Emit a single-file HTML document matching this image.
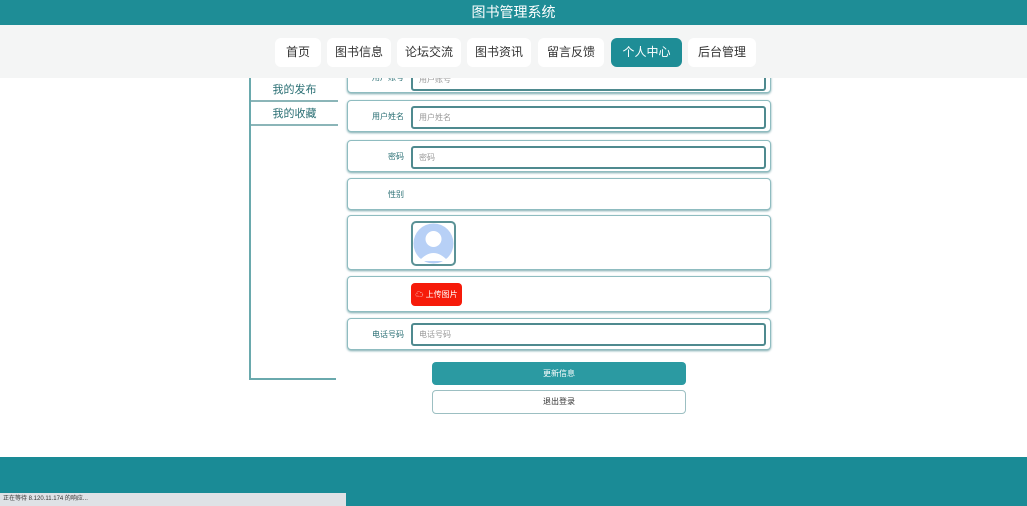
<!DOCTYPE html><html><head><meta charset="utf-8"><style>
*{box-sizing:border-box;margin:0;padding:0}
body{width:1027px;height:506px;overflow:hidden;background:#fff;font-family:"Liberation Sans","Noto Sans CJK SC",sans-serif;position:relative}
.a{position:absolute}
.hd{left:0;top:0;width:1027px;height:25px;background:#1e8d96;color:#fff;font-size:14px;text-align:center;line-height:24px;z-index:5}
.nav{left:0;top:25px;width:1027px;height:53px;background:#f4f5f5;z-index:5}
.ni{top:38px;height:29px;background:#fff;border-radius:6px;font-size:12px;color:#333;text-align:center;line-height:29px;z-index:6}
.act{background:#1e8d96;color:#fff}
.side{left:249px;top:78px;width:87px;height:302px;border-left:2px solid #6aa9ad;border-bottom:2px solid #6aa9ad}
.si{position:absolute;left:0;width:87px;height:24px;font-size:11px;color:#2a6f74;text-align:center;line-height:24px;border-bottom:2px solid #8bb5b8}
.row{left:347px;width:424px;background:#fff;border:1px solid #8fbcc0;border-radius:4px;box-shadow:0 1px 2px #7aa9ad}
.lb{position:absolute;right:366px;top:0;bottom:0;display:flex;align-items:center;font-size:8px;color:#2a6f74}
.in{position:absolute;left:63px;width:355px;height:23px;border:2px solid #4f8a8f;border-radius:3px;font-size:8px;color:#999;padding-left:6px;line-height:19px}
.btn{left:432px;width:254px;border-radius:4px;font-size:8px;text-align:center}
</style></head><body>
<div class="a hd">图书管理系统</div>
<div class="a nav"></div>
<div class="a ni" style="left:275px;width:46px">首页</div>
<div class="a ni" style="left:327px;width:64px">图书信息</div>
<div class="a ni" style="left:397px;width:64px">论坛交流</div>
<div class="a ni" style="left:467px;width:64px">图书资讯</div>
<div class="a ni" style="left:538px;width:66px">留言反馈</div>
<div class="a ni act" style="left:611px;width:71px">个人中心</div>
<div class="a ni" style="left:688px;width:68px">后台管理</div>
<div class="a side"><div class="si" style="top:0">我的发布</div><div class="si" style="top:24px">我的收藏</div></div>
<div class="a row" style="top:62px;height:31px"><div class="lb">用户账号</div><div class="in" style="top:5px">用户账号</div></div>
<div class="a row" style="top:100px;height:32px"><div class="lb">用户姓名</div><div class="in" style="top:5px">用户姓名</div></div>
<div class="a row" style="top:140px;height:32px"><div class="lb">密码</div><div class="in" style="top:5px">密码</div></div>
<div class="a row" style="top:178px;height:32px"><div class="lb">性别</div></div>
<div class="a row" style="top:215px;height:55px"><div style="position:absolute;left:63px;top:5px;width:45px;height:45px;border:2px solid #5b9296;border-radius:5px;overflow:hidden;background:#fff"><svg width="41" height="41" viewBox="0 0 41 41"><circle cx="20.5" cy="20.5" r="20" fill="#b7d0f6"/><circle cx="20.5" cy="16" r="8" fill="#fff"/><path d="M6 38 Q20.5 22 35 38 Z" fill="#fff"/></svg></div></div>
<div class="a row" style="top:276px;height:36px"><div style="position:absolute;left:63px;top:6px;width:51px;height:23px;background:#f61b0a;border-radius:4px;color:#fff;font-size:8px;line-height:23px;text-align:center">☁ 上传图片</div></div>
<div class="a row" style="top:318px;height:32px"><div class="lb">电话号码</div><div class="in" style="top:4px">电话号码</div></div>
<div class="a btn" style="top:362px;height:23px;background:#2b9aa2;color:#fff;line-height:23px">更新信息</div>
<div class="a btn" style="top:390px;height:24px;border:1px solid #9cbfc2;color:#333;line-height:22px">退出登录</div>
<div class="a" style="left:0;top:457px;width:1027px;height:49px;background:#1a8b96"></div>
<div class="a" style="left:0;top:493px;width:346px;height:13px;background:#dfe2e6;font-size:6px;color:#333;line-height:13px;padding-left:3px">正在等待 8.120.11.174 的响应...</div>
</body></html>
